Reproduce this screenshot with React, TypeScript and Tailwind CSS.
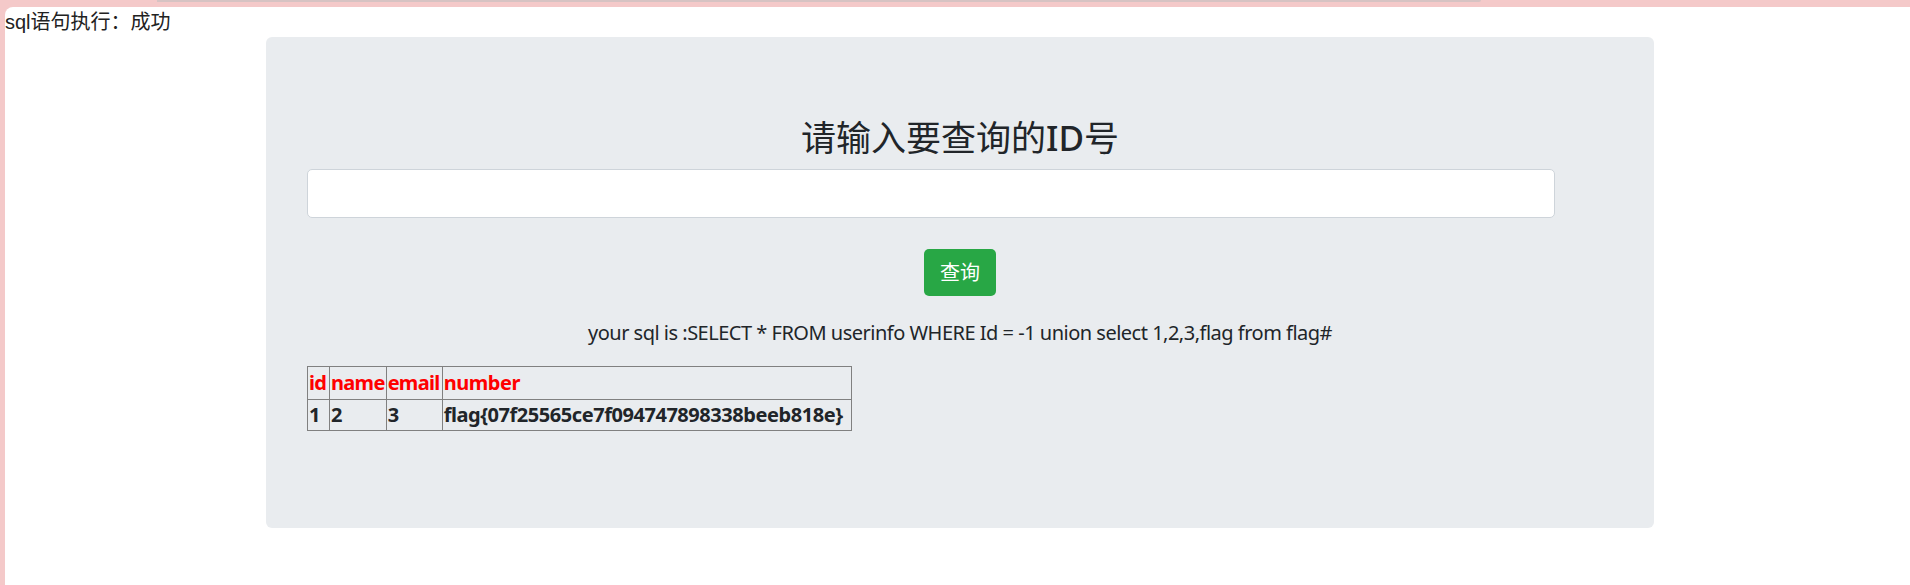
import React from 'react';

const rows = [
    { id: '1', name: '2', email: '3', number: 'flag{07f25565ce7f094747898338beeb818e}' },
];

const App: React.FC = () => {
    return (
        <div className="w-[1910px] h-[585px] bg-[#f4c9c9] flex flex-col overflow-hidden font-['Segoe_UI','Noto_Sans','Noto_Sans_CJK_SC',sans-serif] text-[#212529]">
            {/* browser chrome edge */}
            <div className="h-[7px] shrink-0">
                <div className="ml-[157px] w-[1324px] h-[2px] bg-[#d6c3c3] rounded-br-[3px]" />
            </div>

            <div className="flex-1 ml-[5px] bg-white rounded-tl-[8px]">
                <div className="text-[20px] leading-[30px] font-['Liberation_Sans','Noto_Sans_CJK_SC',sans-serif] text-[#222]">
                    sql语句执行：成功
                </div>

                <div className="ml-[261px] w-[1388px] h-[491px] bg-[#e9ecef] rounded-[6px] px-[41px] pt-[80px]">
                    <h3 className="text-center text-[35px] leading-[42px] font-normal mb-[10px] font-['Noto_Sans','Noto_Sans_CJK_SC',sans-serif]">
                        请输入要查询的<span className="font-medium">ID</span>号
                    </h3>
                    <input
                        type="text"
                        className="block w-[1248px] h-[49px] bg-white border border-[#ced4da] rounded-[5px] px-[15px] text-[20px] outline-none"
                    />
                    <div className="flex justify-center mt-[31px] mb-[22px]">
                        <button className="w-[72px] h-[47px] bg-[#28a745] text-white text-[20px] rounded-[5px]">
                            查询
                        </button>
                    </div>
                    <p className="text-center text-[20px] leading-[30px] mb-[18px] tracking-[-0.5px]">
                        your sql is :SELECT * FROM userinfo WHERE Id = -1 union select 1,2,3,flag from flag#
                    </p>
                    <table className="border-collapse border border-[#808080] text-[20px] leading-[28px] font-bold tracking-[-0.7px]">
                        <thead>
                            <tr className="h-[33px] text-[#ff0000]">
                                <th className="border border-[#808080] w-[22px] px-[1px] text-left font-bold">id</th>
                                <th className="border border-[#808080] w-[55px] px-[1px] text-left font-bold">name</th>
                                <th className="border border-[#808080] w-[56px] px-[1px] text-left font-bold">email</th>
                                <th className="border border-[#808080] w-[409px] px-[1px] text-left font-bold tracking-[-0.45px]">number</th>
                            </tr>
                        </thead>
                        <tbody>
                            {rows.map(r => (
                                <tr key={r.id} className="h-[31px]">
                                    <td className="border border-[#808080] px-[1px]">{r.id}</td>
                                    <td className="border border-[#808080] px-[1px]">{r.name}</td>
                                    <td className="border border-[#808080] px-[1px]">{r.email}</td>
                                    <td className="border border-[#808080] px-[1px] tracking-[-0.45px]">{r.number}</td>
                                </tr>
                            ))}
                        </tbody>
                    </table>
                </div>
            </div>
        </div>
    );
};

export default App;
